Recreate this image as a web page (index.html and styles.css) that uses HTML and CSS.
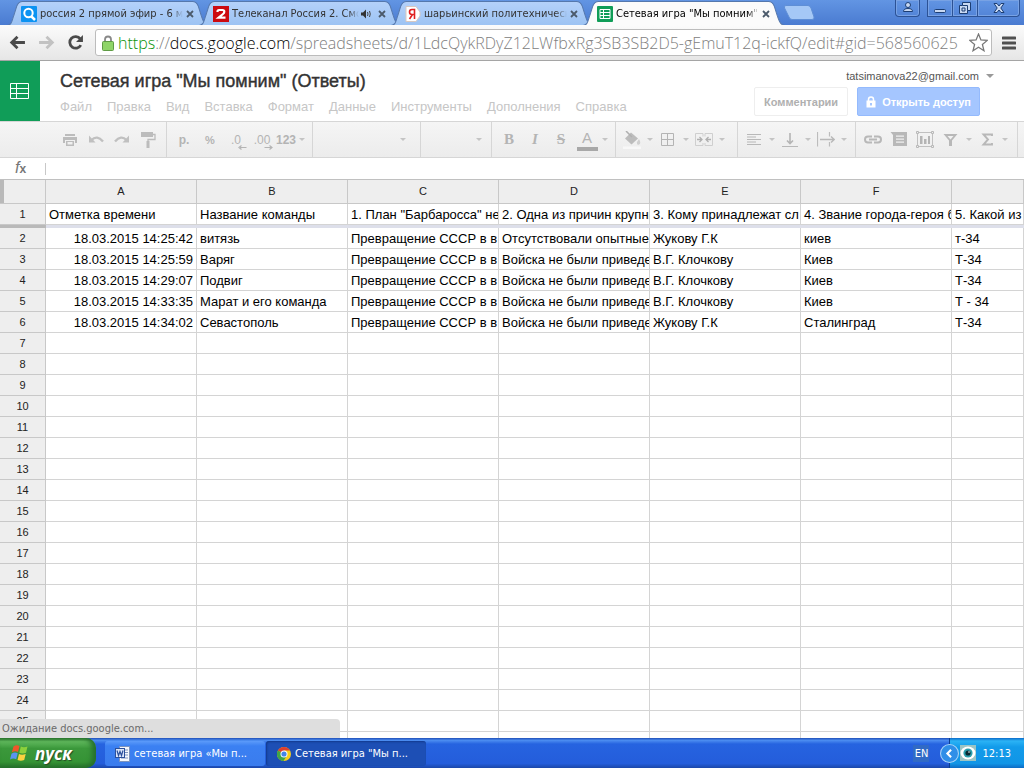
FILE: index.html
```html
<!DOCTYPE html>
<html lang="ru">
<head>
<meta charset="utf-8">
<title>Сетевая игра "Мы помним" (Ответы)</title>
<link rel="stylesheet" href="styles.css">
</head>
<body>
<svg class="defs" aria-hidden="true">
  <defs>
    <linearGradient id="tabFill" x1="0" y1="0" x2="0" y2="1"><stop offset="0" stop-color="#b4d1fa"/><stop offset="1" stop-color="#9cc3f3"/></linearGradient>
    <symbol id="tabShape" viewBox="0 0 208 24" preserveAspectRatio="none"><path d="M0 24.500C5 24 5 20 7 15L10 6Q12 1.500 16 1.500H191Q195 1.500 197 6L200 15C202 20 203 24 208 24.500"/></symbol>
    <symbol id="cross" viewBox="0 0 8 8"><path d="M1 1L7 7M7 1L1 7" stroke="#4b5a6b" stroke-width="1.800"/></symbol>
  </defs>
</svg>

<header class="tabstrip">
  <nav class="tabs">
    <div class="tab">
      <svg class="tab-bg"><use href="#tabShape"/></svg>
      <svg class="fav" viewBox="0 0 16 16"><rect width="16" height="16" rx="1" fill="#0c93f2"/><circle cx="7.500" cy="7" r="4.200" fill="none" stroke="#fff" stroke-width="2"/><path d="M10.500 10.500L14 14" stroke="#fff" stroke-width="2.500"/></svg>
      <span class="tab-title">россия 2 прямой эфир - 6 млн</span>
      <button class="tab-close" aria-label="Закрыть"><svg viewBox="0 0 8 8"><use href="#cross"/></svg></button>
    </div>
    <div class="tab">
      <svg class="tab-bg"><use href="#tabShape"/></svg>
      <svg class="fav" viewBox="0 0 16 16"><rect width="16" height="16" fill="#cc0a10"/><path d="M4.500 6V5.500Q4.500 4 6 4H9.500Q11.300 4 11.300 5.700Q11.300 7 10 8L5.500 11.700H12.500" fill="none" stroke="#fff" stroke-width="2.200"/></svg>
      <span class="tab-title">Телеканал Россия 2. Смотреть</span>
      <svg class="sound" viewBox="0 0 10 10"><path d="M0 3.500H2L5 0.500V9.500L2 6.500H0Z" fill="#333"/><path d="M6.500 3Q7.500 5 6.500 7M8.500 2Q10 5 8.500 8" fill="none" stroke="#444"/></svg>
      <button class="tab-close" aria-label="Закрыть"><svg viewBox="0 0 8 8"><use href="#cross"/></svg></button>
    </div>
    <div class="tab">
      <svg class="tab-bg"><use href="#tabShape"/></svg>
      <svg class="fav" viewBox="0 0 16 16"><path d="M1 0.500H11L15 6V10L11 15.500H1Z" fill="#fff" stroke="#d8c8c0"/><path d="M9.500 13V3.500H7Q4.500 3.500 4.500 6T7 8.500H9.500M7.500 8.500L4.500 13" fill="none" stroke="#e02020" stroke-width="1.600"/></svg>
      <span class="tab-title">шарьинский политехнический</span>
      <button class="tab-close" aria-label="Закрыть"><svg viewBox="0 0 8 8"><use href="#cross"/></svg></button>
    </div>
    <div class="tab active">
      <svg class="tab-bg"><use href="#tabShape"/></svg>
      <svg class="fav" viewBox="0 0 16 16"><rect width="16" height="16" rx="1" fill="#109d58"/><path d="M3 3.500H13V12.500H3ZM3 6.500H13M3 9.500H13M6.500 3.500V12.500" fill="none" stroke="#fff"/></svg>
      <span class="tab-title">Сетевая игра "Мы помним" (Ответы)</span>
      <button class="tab-close" aria-label="Закрыть"><svg viewBox="0 0 8 8"><use href="#cross"/></svg></button>
    </div>
  </nav>
  <button class="new-tab" aria-label="Новая вкладка"><svg viewBox="0 0 32 16"><path d="M3 0.500H25Q27 0.500 28 3L31 12Q31.500 14.500 29 14.500H9Q7 14.500 6 12L1.500 3Q0.500 0.500 3 0.500Z" fill="#a5c8f6" stroke="#5f8fd6"/></svg></button>
  <div class="window-buttons">
    <button class="wb user" aria-label="Пользователь"><svg viewBox="0 0 12 12"><circle cx="6" cy="3" r="2.500" fill="#c9d9f2" stroke="#1c3e74"/><path d="M1.500 9.500Q1.500 6.500 6 6.500T10.500 9.500Z" fill="#c9d9f2" stroke="#1c3e74"/></svg></button>
    <div class="wb-group">
      <button class="wb" aria-label="Свернуть"><svg viewBox="0 0 12 12"><rect x="0.500" y="7.500" width="11" height="3" rx="1" fill="#c9d9f2" stroke="#1c3e74"/></svg></button>
      <button class="wb" aria-label="Восстановить"><svg viewBox="0 0 12 12"><path d="M3.500 0.500H11.500V8.500H8.500V11.500H0.500V3.500H3.500Z" fill="#c9d9f2" stroke="#1c3e74"/><path d="M3.500 3.500H8.500V8.500M3 6H6V9H3Z" fill="none" stroke="#1c3e74"/></svg></button>
      <button class="wb close" aria-label="Закрыть"><svg viewBox="0 0 12 12"><path d="M1 1.500H4L6 4L8 1.500H11L7.800 6L11 10.500H8L6 8L4 10.500H1L4.200 6Z" fill="#c9d9f2" stroke="#1c3e74"/></svg></button>
    </div>
  </div>
</header>

<div class="navbar">
  <button class="nav" aria-label="Назад"><svg viewBox="0 0 16 14"><path d="M15 7H3M8 1.500L2.500 7L8 12.500" fill="none" stroke="#4a4a4a" stroke-width="2.600"/></svg></button>
  <button class="nav" aria-label="Вперёд"><svg viewBox="0 0 16 14"><path d="M1 7H13M8 1.500L13.500 7L8 12.500" fill="none" stroke="#c2c2c2" stroke-width="2.600"/></svg></button>
  <button class="nav" aria-label="Обновить"><svg viewBox="0 0 16 14"><path d="M12.500 3.500A5.500 5.500 0 1 0 13 9.500" fill="none" stroke="#4a4a4a" stroke-width="2.600"/><path d="M15 0V6.500H8.500Z" fill="#4a4a4a"/></svg></button>
  <div class="omnibox">
    <svg class="lock" viewBox="0 0 12 16"><path d="M3 8V4.500Q3 1.500 6 1.500T9 4.500V8" fill="none" stroke="#888" stroke-width="1.800"/><rect x="0.500" y="6.500" width="11" height="9" rx="1" fill="#8fd468" stroke="#5f9b45"/></svg>
    <div class="url" role="textbox" contenteditable="true" spellcheck="false" aria-label="Адрес"><span class="secure">https</span>://<span class="host">docs.google.com</span>/spreadsheets/d/1LdcQykRDyZ12LWfbxRg3SB3SB2D5-gEmuT12q-ickfQ/edit#gid=568560625</div>
    <button class="star" aria-label="В закладки"><svg viewBox="0 0 18 18"><path d="M9 1L11.300 6.600L17.300 7L12.700 10.900L14.200 16.800L9 13.500L3.800 16.800L5.300 10.900L0.700 7L6.700 6.600Z" fill="#fff" stroke="#777" stroke-width="1.200"/></svg></button>
  </div>
  <button class="menu-btn" aria-label="Меню"><svg viewBox="0 0 14 14"><path d="M1 2H13M1 7H13M1 12H13" stroke="#505050" stroke-width="3" stroke-linecap="round"/></svg></button>
</div>

<div class="doc-head">
  <a class="logo" href="#" aria-label="Таблицы"><svg viewBox="0 0 20 16"><path d="M0.500 0.500H18.500V15.500H0.500ZM0.500 5.500H18.500M0.500 10.500H18.500M6.500 0.500V15.500" fill="none" stroke="#fff"/></svg></a>
  <div class="doc-info">
    <h1>Сетевая игра "Мы помним" (Ответы)</h1>
    <nav class="doc-menu">
      <button>Файл</button><button>Правка</button><button>Вид</button><button>Вставка</button><button>Формат</button><button>Данные</button><button>Инструменты</button><button>Дополнения</button><button>Справка</button>
    </nav>
  </div>
  <div class="account">
    <button class="mail">tatsimanova22@gmail.com <i class="caret dark"></i></button>
    <div class="actions">
      <button class="comments">Комментарии</button>
      <button class="share"><svg viewBox="0 0 10 12"><path d="M2.500 5V3.500Q2.500 1 5 1T7.500 3.500V5" fill="none" stroke="#fff" stroke-width="1.500"/><path d="M0.500 4.500H9.500V11.500H0.500ZM4 7V9.500H6V7Z" fill="#fff" fill-rule="evenodd"/></svg>Открыть доступ</button>
    </div>
  </div>
</div>

<div class="toolbar">
  <div class="group first">
    <button class="tool" aria-label="Печать"><svg viewBox="0 0 18 18"><path d="M4 3H14V5H4ZM2 6H16V12H14V9H4V12H2ZM5 10H13V15H5ZM6.500 11V13.500H11.500V11Z" fill="#bcbcbc" fill-rule="evenodd"/></svg></button>
    <button class="tool" aria-label="Отменить"><svg viewBox="0 0 18 18"><path d="M2 4.500V11.500H8.500Z" fill="#c0c0c0"/><path d="M4.500 9Q10 3.500 16 10.500" fill="none" stroke="#c0c0c0" stroke-width="2.400"/></svg></button>
    <button class="tool" aria-label="Повторить"><svg viewBox="0 0 18 18"><path d="M16 4.500V11.500H9.500Z" fill="#c0c0c0"/><path d="M13.500 9Q8 3.500 2 10.500" fill="none" stroke="#c0c0c0" stroke-width="2.400"/></svg></button>
    <button class="tool" aria-label="Копировать форматирование"><svg viewBox="0 0 18 18"><path d="M2 1H14V6H2ZM7.500 10H10.500V17H7.500Z" fill="#bcbcbc"/><path d="M14 3.500H16V8.500H9V11" fill="none" stroke="#bcbcbc" stroke-width="1.300"/></svg></button>
  </div>
  <div class="group">
    <button class="tool txt">р.</button>
    <button class="tool txt small">%</button>
    <button class="tool dec"><span>.0</span><svg viewBox="0 0 9 5"><path d="M8.500 2.500H2M3.500 0.500L1 2.500L3.500 4.500" fill="none" stroke="#b4b4b4" stroke-width="1.200"/></svg></button>
    <button class="tool dec"><span>.00</span><svg viewBox="0 0 9 5"><path d="M0.500 2.500H7M5.500 0.500L8 2.500L5.500 4.500" fill="none" stroke="#b4b4b4" stroke-width="1.200"/></svg></button>
    <button class="tool split num"><span>123</span><i class="caret"></i></button>
  </div>
  <div class="group"><button class="drop font" aria-label="Шрифт"><i class="caret"></i></button></div>
  <div class="group"><button class="drop size" aria-label="Размер"><i class="caret"></i></button></div>
  <div class="group format">
    <button class="tool serif">B</button>
    <button class="tool serif italic">I</button>
    <button class="tool serif strike">S</button>
    <button class="tool split"><span class="color-a">A</span><i class="caret"></i></button>
  </div>
  <div class="group borders">
    <button class="tool split" aria-label="Заливка"><svg viewBox="0 0 18 18"><path d="M2 7.500L8 1.500L15 7.500L8.500 13.500Z" fill="#bcbcbc"/><path d="M3 0L9 6" fill="none" stroke="#b0b0b0" stroke-width="1.500"/><path d="M16 8Q18.500 12.500 16 13.500T14 11Z" fill="#d0d0d0"/><path d="M0 15.500H18V18H0Z" fill="#f8f8f8"/></svg><i class="caret"></i></button>
    <button class="tool split" aria-label="Границы"><svg viewBox="0 0 18 18"><path d="M2.500 2.500H14.500V14.500H2.500ZM8.500 2.500V14.500M2.500 8.500H14.500" fill="none" stroke="#b4b4b4"/></svg><i class="caret"></i></button>
    <button class="tool split" aria-label="Объединить"><svg viewBox="0 0 18 18"><path d="M8 5.500V2.500H0.500V6M0.500 11V14.500H8V12M0.500 6V11M10 5.500V2.500H17.500V14.500H10V12" fill="none" stroke="#cfcfcf"/><path d="M2 8.500H7M4.500 6L7 8.500L4.500 11M16 8.500H11M13.500 6L11 8.500L13.500 11" fill="none" stroke="#b0b0b0" stroke-width="1.300"/></svg><i class="caret"></i></button>
  </div>
  <div class="group align">
    <button class="tool split" aria-label="По горизонтали"><svg viewBox="0 0 18 18"><path d="M2 3.500H16M2 6H11M2 8.500H16M2 11H11M2 13.500H16" stroke="#b8b8b8" stroke-width="1.200"/></svg><i class="caret"></i></button>
    <button class="tool split" aria-label="По вертикали"><svg viewBox="0 0 18 18"><path d="M1 15.500H17" stroke="#b8b8b8"/><path d="M9 2V12M6 9.500L9 12.500L12 9.500" fill="none" stroke="#b4b4b4" stroke-width="1.600"/></svg><i class="caret"></i></button>
    <button class="tool split" aria-label="Перенос"><svg viewBox="0 0 18 18"><path d="M0.500 1V15.500M12.500 1V5.500M12.500 11V15.500" stroke="#bcbcbc" stroke-width="1.200"/><path d="M3 8.500H17M14 5.500L17.200 8.500L14 11.500" fill="none" stroke="#b8b8b8" stroke-width="1.400"/></svg><i class="caret"></i></button>
  </div>
  <div class="group insert">
    <button class="tool" aria-label="Ссылка"><svg viewBox="0 0 18 18"><path d="M8 5.500H4Q1 5.500 1 8.500T4 11.500H8M10 5.500H14Q17 5.500 17 8.500T14 11.500H10M5 8.500H13" fill="none" stroke="#b8b8b8" stroke-width="2"/></svg></button>
    <button class="tool" aria-label="Комментарий"><svg viewBox="0 0 18 18"><path d="M0.500 1H17V15H3V4ZM6 4.500V5.700H14V4.500ZM6 7.500V8.700H14V7.500ZM6 10.500V11.700H14V10.500Z" fill="#b8b8b8" fill-rule="evenodd"/></svg></button>
    <button class="tool" aria-label="Диаграмма"><svg viewBox="0 0 18 18"><path d="M1.500 1.500H16.500V15.500H1.500Z" fill="none" stroke="#c0c0c0"/><path d="M4 5H6.500V13H4ZM8 8H10.500V13H8ZM12 5H14V13H12Z" fill="#b4b4b4"/><path d="M0.500 0.500H2.500V2.500H0.500ZM15.500 0.500H17.500V2.500H15.500ZM0.500 14.500H2.500V16.500H0.500ZM15.500 14.500H17.500V16.500H15.500Z" fill="#eee" stroke="#b8b8b8"/></svg></button>
    <button class="tool split" aria-label="Фильтр"><svg viewBox="0 0 18 18"><path d="M1.500 3H15.500L10 9.500V15H7V9.500ZM5.500 5L8.500 8.500L11.500 5Z" fill="#b8b8b8" fill-rule="evenodd"/></svg><i class="caret"></i></button>
    <button class="tool split" aria-label="Функции"><svg viewBox="0 0 18 18"><path d="M14 5V3.500H5.500L10 8.500L5.500 13.500H14V12" fill="none" stroke="#b8b8b8" stroke-width="1.900"/></svg><i class="caret"></i></button>
  </div>
</div>

<div class="formula"><label for="fx"><i>f</i><b>x</b></label><input id="fx" type="text"></div>

<main class="grid">
  <table>
    <colgroup><col class="c-head"><col><col><col><col><col><col><col class="c-last"></colgroup>
    <thead>
      <tr class="letters"><th class="corner"></th><th>A</th><th>B</th><th>C</th><th>D</th><th>E</th><th>F</th><th></th></tr>
      <tr><th>1</th><td>Отметка времени</td><td>Название команды</td><td>1. План "Барбаросса" не</td><td>2. Одна из причин крупных</td><td>3. Кому принадлежат сл</td><td>4. Звание города-героя был</td><td>5. Какой из</td></tr>
      <tr class="freeze"><th></th><td colspan="7"></td></tr>
    </thead>
    <tbody>
      <tr><th>2</th><td class="date">18.03.2015 14:25:42</td><td>витязь</td><td>Превращение СССР в в</td><td>Отсутствовали опытные</td><td>Жукову Г.К</td><td>киев</td><td>т-34</td></tr>
      <tr><th>3</th><td class="date">18.03.2015 14:25:59</td><td>Варяг</td><td>Превращение СССР в в</td><td>Войска не были приведены</td><td>В.Г. Клочкову</td><td>Киев</td><td>Т-34</td></tr>
      <tr><th>4</th><td class="date">18.03.2015 14:29:07</td><td>Подвиг</td><td>Превращение СССР в в</td><td>Войска не были приведены</td><td>В.Г. Клочкову</td><td>Киев</td><td>Т-34</td></tr>
      <tr><th>5</th><td class="date">18.03.2015 14:33:35</td><td>Марат и его команда</td><td>Превращение СССР в в</td><td>Войска не были приведены</td><td>В.Г. Клочкову</td><td>Киев</td><td>Т - 34</td></tr>
      <tr><th>6</th><td class="date">18.03.2015 14:34:02</td><td>Севастополь</td><td>Превращение СССР в в</td><td>Войска не были приведены</td><td>Жукову Г.К</td><td>Сталинград</td><td>Т-34</td></tr>
      <tr><th>7</th><td></td><td></td><td></td><td></td><td></td><td></td><td></td></tr>
      <tr><th>8</th><td></td><td></td><td></td><td></td><td></td><td></td><td></td></tr>
      <tr><th>9</th><td></td><td></td><td></td><td></td><td></td><td></td><td></td></tr>
      <tr><th>10</th><td></td><td></td><td></td><td></td><td></td><td></td><td></td></tr>
      <tr><th>11</th><td></td><td></td><td></td><td></td><td></td><td></td><td></td></tr>
      <tr><th>12</th><td></td><td></td><td></td><td></td><td></td><td></td><td></td></tr>
      <tr><th>13</th><td></td><td></td><td></td><td></td><td></td><td></td><td></td></tr>
      <tr><th>14</th><td></td><td></td><td></td><td></td><td></td><td></td><td></td></tr>
      <tr><th>15</th><td></td><td></td><td></td><td></td><td></td><td></td><td></td></tr>
      <tr><th>16</th><td></td><td></td><td></td><td></td><td></td><td></td><td></td></tr>
      <tr><th>17</th><td></td><td></td><td></td><td></td><td></td><td></td><td></td></tr>
      <tr><th>18</th><td></td><td></td><td></td><td></td><td></td><td></td><td></td></tr>
      <tr><th>19</th><td></td><td></td><td></td><td></td><td></td><td></td><td></td></tr>
      <tr><th>20</th><td></td><td></td><td></td><td></td><td></td><td></td><td></td></tr>
      <tr><th>21</th><td></td><td></td><td></td><td></td><td></td><td></td><td></td></tr>
      <tr><th>22</th><td></td><td></td><td></td><td></td><td></td><td></td><td></td></tr>
      <tr><th>23</th><td></td><td></td><td></td><td></td><td></td><td></td><td></td></tr>
      <tr><th>24</th><td></td><td></td><td></td><td></td><td></td><td></td><td></td></tr>
      <tr><th>25</th><td></td><td></td><td></td><td></td><td></td><td></td><td></td></tr>
      <tr><th></th><td></td><td></td><td></td><td></td><td></td><td></td><td></td></tr>
    </tbody>
  </table>
  <div class="status">Ожидание docs.google.com...</div>
</main>

<footer class="taskbar">
  <button class="start"><svg viewBox="0 0 20 18"><path d="M3.500 2.500Q6.500 0.500 9.500 2L8 8Q5 6.500 1.800 8.500Z" fill="#f0562a"/><path d="M10.800 2.600Q14 4 17.500 2.500L16 8.700Q12.500 10.300 9.300 8.700Z" fill="#8cd03c"/><path d="M1.500 9.700Q4.500 7.800 7.700 9.200L6.200 15.200Q3 13.800 0 15.600Z" fill="#5a94f0"/><path d="M9 10Q12 11.400 15.700 9.900L14.200 16Q10.800 17.500 7.500 16Z" fill="#fbd240"/></svg>пуск</button>
  <div class="tasks">
    <button class="task"><svg viewBox="0 0 16 16"><path d="M4.500 0.500H14.500V15.500H4.500Z" fill="#f4f7fd" stroke="#7c93bd"/><path d="M9 4H13M10 6.500H13M10 9H13M6 12H13" stroke="#7c93bd"/><rect x="0.500" y="2.500" width="9" height="9" fill="#dbe6fa" stroke="#2b4f9c"/><path d="M2 4.500L3.500 9.500L5 5.500L6.500 9.500L8 4.500" fill="none" stroke="#2b4f9c" stroke-width="1.200"/></svg>сетевая игра «Мы п...</button>
    <button class="task pressed"><svg viewBox="0 0 16 16"><circle cx="8" cy="8" r="7" fill="#f7cd1c"/><path d="M8 8L1.900 4.500A7 7 0 0 1 14.100 4.500H8Z" fill="#dd3f2f"/><path d="M8 8L1.900 4.500A7 7 0 0 0 7.500 15L11 9.500Z" fill="#3fa548"/><circle cx="8" cy="8" r="3.500" fill="#fff"/><circle cx="8" cy="8" r="2.600" fill="#4485e8"/></svg>Сетевая игра "Мы п...</button>
  </div>
  <button class="lang">EN</button>
  <div class="tray">
    <button class="expand" aria-label="Показать значки"><svg viewBox="0 0 18 18"><circle cx="9" cy="9" r="8.500" fill="#2f8fe8" stroke="#a9d4f7"/><path d="M10.500 5.500L7 9L10.500 12.500" fill="none" stroke="#fff" stroke-width="2"/></svg></button>
    <svg class="eye" viewBox="0 0 16 16"><rect width="16" height="16" fill="#9cc4c4"/><ellipse cx="8" cy="8" rx="7.500" ry="6.500" fill="#fff"/><circle cx="8" cy="8" r="4.600" fill="#2b9fae"/><circle cx="8" cy="8" r="2.600" fill="#062a33"/><circle cx="9" cy="7" r="0.800" fill="#fff"/></svg>
    <time>12:13</time>
  </div>
</footer>
</body>
</html>
```
FILE: styles.css
```css
* { box-sizing: border-box; }
body {
  margin: 0;
  height: 100vh;
  display: flex;
  flex-direction: column;
  overflow: hidden;
  background: #fff;
  color: #000;
  font-family: "Liberation Sans", Arial, sans-serif;
  font-size: 13px;
}
button {
  margin: 0;
  padding: 0;
  border: 0;
  background: none;
  color: inherit;
  font: inherit;
  white-space: nowrap;
}
svg { display: block; flex: none; }
.defs { position: absolute; width: 0; height: 0; }
.caret {
  flex: none;
  border: 3px solid transparent;
  border-top-color: #c4c4c4;
  border-bottom: 0;
}
.caret.dark { border-width: 4px 4px 0; border-top-color: #999; }

/* browser frame */
.tabstrip {
  flex: none;
  display: flex;
  height: 25px;
  padding-left: 7px;
  background: linear-gradient(#6295e3, #4a7bd1);
  font-family: "DejaVu Sans Condensed", "DejaVu Sans", sans-serif;
  font-size: 11px;
}
.tabs { display: flex; flex: 0 1 768px; min-width: 0; }
.tab {
  position: relative;
  display: flex;
  align-items: center;
  flex: 1 1 202px;
  min-width: 0;
  margin-right: -10px;
  padding: 2px 15px 0 14px;
  color: #333;
}
.tab-bg {
  position: absolute;
  inset: 0;
  width: 100%;
  height: 25px;
  fill: url(#tabFill);
  stroke: #5578ad;
}
.active .tab-bg { fill: #fbfbfb; }
.tab.active { color: #000; z-index: 1; }
.tab > * { z-index: 1; }
.tab > .tab-bg { z-index: 0; }
.fav { width: 16px; height: 16px; margin-right: 3px; }
.tab-title {
  flex: 1;
  overflow: hidden;
  white-space: nowrap;
  mask-image: linear-gradient(90deg, #000 92%, transparent);
}
.sound { width: 10px; height: 10px; margin: 0 4px 0 2px; }
.tab-close { margin-left: 3px; }
.tab-close svg { width: 8px; height: 8px; }
.new-tab { align-self: center; margin-left: 8px; }
.new-tab svg { width: 32px; height: 16px; }
.window-buttons { display: flex; gap: 7px; margin: 0 4px 0 auto; }
.wb-group { display: flex; }
.wb {
  display: grid;
  place-items: center;
  width: 25px;
  height: 17px;
  border: 1px solid #2c5295;
  border-top: 0;
  border-radius: 0 0 4px 4px;
  box-shadow: inset 0 0 0 1px #78a2e4;
}
.wb-group .wb { width: 26px; border-radius: 0; margin-right: -1px; }
.wb-group .close { width: 43px; border-radius: 0 0 4px 0; margin-right: 0; }
.wb svg { width: 12px; height: 12px; }
.navbar {
  flex: none;
  display: flex;
  align-items: center;
  height: 36px;
  padding: 0 8px;
  border-bottom: 1px solid #a5a5a5;
  background: linear-gradient(#fbfbfb, #e6e6e6);
}
.nav { width: 29px; padding-left: 1px; }
.nav svg { width: 17px; height: 15px; }
.omnibox {
  flex: 1;
  min-width: 0;
  display: flex;
  align-items: center;
  height: 27px;
  margin-right: 10px;
  padding: 0 3px 0 6px;
  border: 1px solid #bcbcbc;
  border-radius: 3px;
  background: #fff;
}
.lock { width: 12px; height: 16px; margin-right: 4px; }
.url {
  flex: 1;
  min-width: 0;
  overflow: hidden;
  white-space: nowrap;
  color: #808080;
  font-family: "Open Sans", sans-serif;
  font-size: 16px;
  font-weight: 300;
  line-height: 24px;
}
.secure { color: #0a930a; }
.host { color: #000; }
.star svg { width: 19px; height: 19px; }
.menu-btn svg { width: 14px; height: 14px; }

/* document heading */
.doc-head { flex: none; display: flex; height: 60px; }
.logo { display: grid; place-items: center; width: 40px; background: #109d58; }
.logo svg { width: 20px; height: 16px; }
.doc-info { flex: 1; min-width: 0; padding: 9px 0 0 20px; }
h1 { margin: 0; color: #333; font-size: 18px; font-weight: 400; line-height: 22px; white-space: nowrap; -webkit-text-stroke: 0.4px #333; }
.doc-menu { display: flex; gap: 15px; margin-top: 6px; color: #c6c6c6; line-height: 18px; }
.account { display: flex; flex-direction: column; align-items: flex-end; padding: 7px 30px 0 0; }
.mail { display: flex; align-items: center; gap: 7px; color: #555; font-size: 11px; line-height: 16px; }
.actions { display: flex; gap: 9px; margin: 3px 14px 0 0; font-size: 11px; font-weight: 700; }
.comments, .share { height: 29px; border: 1px solid #eee; border-radius: 2px; }
.comments { padding: 0 9px; color: #b0b0b0; }
.share { display: flex; align-items: center; gap: 6px; padding: 0 8px; border-color: #94bafd; background: #a5c6ff; color: #fff; }
.share svg { width: 10px; height: 12px; }

/* editing toolbar */
.toolbar {
  flex: none;
  display: flex;
  height: 37px;
  border-top: 1px solid #d6d6d6;
  border-bottom: 1px solid #d6d6d6;
  background: linear-gradient(#f5f5f5, #ececec);
  color: #b4b4b4;
}
.group { display: flex; flex: none; align-items: center; padding: 0 5px 0 4px; border-right: 1px solid #d6d6d6; }
.group.first { padding-left: 57px; }
.tool { display: grid; place-items: center; width: 26px; height: 28px; }
.tool svg { width: 18px; height: 18px; }
.split { display: grid; grid-template-columns: 26px 10px; width: 36px; }
.txt { font-size: 12px; font-weight: 700; }
.small { font-size: 11px; }
.num { grid-template-columns: 22px 10px; width: 32px; font-size: 12px; font-weight: 700; }
.dec { position: relative; font-size: 12px; }
.tool.dec svg { position: absolute; right: 2px; bottom: 4px; width: 9px; height: 5px; }
.drop { display: flex; justify-content: flex-end; padding-right: 9px; }
.font { width: 98px; }
.size { width: 61px; padding-right: 4px; }
.serif { font-family: "Liberation Serif", serif; font-size: 15px; font-weight: 700; }
.italic { font-style: italic; }
.strike { text-decoration: line-through; }
.color-a { width: 21px; border-bottom: 4px solid #a8a8a8; font-size: 15px; line-height: 18px; }
.format { padding-right: 5px; }
.borders { padding: 0 10px 0 3px; }
.align { padding: 0 6px 0 3px; }
.insert { padding-right: 7px; }

.formula { flex: none; display: flex; align-items: center; height: 22px; border-bottom: 1px solid #c0c0c0; }
.formula label { width: 45px; padding-left: 15px; color: #777; font-size: 16px; line-height: 20px; }
.formula b { font-size: 12px; }
.formula input { flex: 1; height: 12px; border: 0; border-left: 1px solid #c8c8c8; outline: 0; font: inherit; }

/* sheet */
.grid { position: relative; flex: 1; min-height: 0; overflow: hidden; }
table { width: 100%; table-layout: fixed; border-collapse: separate; border-spacing: 0; }
col { width: 151px; }
.c-head { width: 46px; }
.c-last { width: auto; }
th, td {
  height: 21px;
  padding: 1px 3px 0;
  overflow: hidden;
  border-right: 1px solid #d4d4d4;
  border-bottom: 1px solid #d4d4d4;
  line-height: 19px;
  text-align: left;
  white-space: nowrap;
}
th { padding-top: 0; border-color: #c8c8c8; background: #eee; color: #222; font-size: 11px; font-weight: 400; text-align: center; }
.letters th { height: 24px; }
.corner { box-shadow: inset 4px 0 #b9b9b9; }
.date { text-align: right; }
.freeze th, .freeze td { height: 3px; padding: 0; border: 0; background: #dddfea; }
.freeze th { background: #b9b9b9; }
.status {
  position: absolute;
  left: 0;
  bottom: 0;
  width: 340px;
  height: 19px;
  padding-left: 2px;
  border-radius: 0 4px 0 0;
  background: #dedede;
  color: #6a6a6a;
  font-family: "DejaVu Sans Condensed", "DejaVu Sans", sans-serif;
  font-size: 11px;
  line-height: 20px;
}

/* desktop taskbar */
.taskbar {
  flex: none;
  display: flex;
  height: 30px;
  background: linear-gradient(#1f4fb8, #4b8cf0 8%, #2663e0 20%, #245ddb 85%, #1b47a9);
  color: #fff;
  font-family: "DejaVu Sans Condensed", "DejaVu Sans", sans-serif;
  font-size: 11px;
}
.start {
  display: flex;
  align-items: center;
  gap: 5px;
  width: 96px;
  padding-left: 10px;
  border-radius: 0 10px 10px 0;
  background: linear-gradient(#2f7a2f, #5fb85c 12%, #3b983b 35%, #359335 80%, #25702a);
  box-shadow: inset -4px 0 5px #26702c;
  font-family: "Open Sans", sans-serif;
  font-size: 17px;
  font-style: italic;
  font-weight: 700;
  text-shadow: 1px 1px 1px #244a24;
}
.start svg { width: 20px; height: 18px; }
.tasks { flex: 1; display: flex; gap: 1px; padding: 3px 0 2px 9px; min-width: 0; }
.task {
  display: flex;
  align-items: center;
  gap: 3px;
  width: 160px;
  padding-left: 10px;
  border-radius: 3px;
  background: linear-gradient(#5c9bfa, #3b80f2 20%, #3a7cee);
}
.task svg { width: 16px; height: 16px; }
.pressed { background: #1d4fb5; box-shadow: inset 1px 1px 2px #123a8c; }
.lang { align-self: center; width: 16px; margin-right: 20px; background: #316ac5; line-height: 17px; display: grid; place-items: center; }
.tray {
  display: flex;
  align-items: center;
  padding-right: 13px;
  border-left: 1px solid #0b3d91;
  background: linear-gradient(#0d6bc9, #2bb3f5 10%, #129bea 30%, #1195e6 85%, #0d6bc4);
}
.expand { margin-left: -10px; }
.expand svg { width: 19px; height: 19px; }
.eye { width: 16px; height: 16px; margin: 0 6px 0 1px; }
```
